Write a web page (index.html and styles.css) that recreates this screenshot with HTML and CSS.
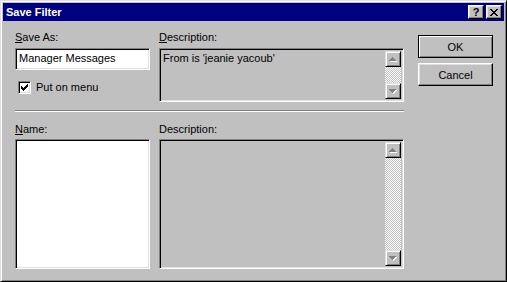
FILE: index.html
```
<!DOCTYPE html>
<html lang="en">
<head>
    <meta charset="UTF-8">
    <title>Save Filter</title>
    <link rel="stylesheet" href="styles.css">
</head>
<body>
    <div class="window">
        <div class="titlebar">
            <span class="title">Save Filter</span>
            <div class="caption-buttons">
                <div class="cap-btn help">?</div>
                <div class="cap-btn close">
                    <svg width="8" height="7" viewBox="0 0 8 7" shape-rendering="crispEdges"><path fill="#000" d="M0 0h2v1H0z M6 0h2v1H6z M1 1h2v1H1z M5 1h2v1H5z M2 2h4v1H2z M3 3h2v1H3z M2 4h4v1H2z M1 5h2v1H1z M5 5h2v1H5z M0 6h2v1H0z M6 6h2v1H6z"/></svg>
                </div>
            </div>
        </div>
        <div class="dialog">
            <div class="main">
                <div class="row top">
                    <div class="col name-col">
                        <div class="label"><u>S</u>ave As:</div>
                        <div class="edit">Manager Messages</div>
                        <div class="check-row">
                            <div class="checkbox">
                                <svg width="7" height="7" viewBox="0 0 7 7" shape-rendering="crispEdges"><path fill="#000" d="M0 2h1v3H0z M1 3h1v3H1z M2 4h1v3H2z M3 3h1v3H3z M4 2h1v3H4z M5 1h1v3H5z M6 0h1v3H6z"/></svg>
                            </div>
                            <span>Put on menu</span>
                        </div>
                    </div>
                    <div class="col desc-col">
                        <div class="label"><u>D</u>escription:</div>
                        <div class="memo small">
                            <div class="memo-text">From is 'jeanie yacoub'</div>
                            <div class="scrollbar">
                                <div class="sb-btn">
                                    <svg width="8" height="5" viewBox="0 0 8 5" shape-rendering="crispEdges"><path fill="#fff" d="M4 1h1v1H4z M3 2h3v1H3z M2 3h5v1H2z M1 4h7v1H1z"/><path fill="#808080" d="M3 0h1v1H3z M2 1h3v1H2z M1 2h5v1H1z M0 3h7v1H0z"/></svg>
                                </div>
                                <div class="sb-track"></div>
                                <div class="sb-btn">
                                    <svg width="8" height="5" viewBox="0 0 8 5" shape-rendering="crispEdges"><path fill="#fff" d="M1 1h7v1H1z M2 2h5v1H2z M3 3h3v1H3z M4 4h1v1H4z"/><path fill="#808080" d="M0 0h7v1H0z M1 1h5v1H1z M2 2h3v1H2z M3 3h1v1H3z"/></svg>
                                </div>
                            </div>
                        </div>
                    </div>
                </div>
                <div class="separator"></div>
                <div class="row bottom">
                    <div class="col name-col">
                        <div class="label"><u>N</u>ame:</div>
                        <div class="listbox"></div>
                    </div>
                    <div class="col desc-col">
                        <div class="label">Description:</div>
                        <div class="memo large">
                            <div class="memo-text"></div>
                            <div class="scrollbar">
                                <div class="sb-btn">
                                    <svg width="8" height="5" viewBox="0 0 8 5" shape-rendering="crispEdges"><path fill="#fff" d="M4 1h1v1H4z M3 2h3v1H3z M2 3h5v1H2z M1 4h7v1H1z"/><path fill="#808080" d="M3 0h1v1H3z M2 1h3v1H2z M1 2h5v1H1z M0 3h7v1H0z"/></svg>
                                </div>
                                <div class="sb-track"></div>
                                <div class="sb-btn">
                                    <svg width="8" height="5" viewBox="0 0 8 5" shape-rendering="crispEdges"><path fill="#fff" d="M1 1h7v1H1z M2 2h5v1H2z M3 3h3v1H3z M4 4h1v1H4z"/><path fill="#808080" d="M0 0h7v1H0z M1 1h5v1H1z M2 2h3v1H2z M3 3h1v1H3z"/></svg>
                                </div>
                            </div>
                        </div>
                    </div>
                </div>
            </div>
            <div class="buttons">
                <button class="btn default">OK</button>
                <button class="btn">Cancel</button>
            </div>
        </div>
    </div>
</body>
</html>
```

FILE: styles.css
```
body{
    margin: 0;
    background: #c0c0c0;
    font-family: "Liberation Sans", Arial, sans-serif;
    font-size: 11px;
    line-height: 13px;
    color: #000;
}
.window{
    box-sizing: border-box;
    width: 507px;
    height: 282px;
    padding: 2px;
    background: #c0c0c0;
    border: 1px solid;
    border-color: #dfdfdf #000 #000 #dfdfdf;
    box-shadow: inset 1px 1px #fff, inset -1px -1px #808080;
}
.titlebar{
    height: 18px;
    background: #000080;
    display: flex;
    align-items: center;
    justify-content: space-between;
    padding: 0 2px 0 3px;
}
.title{
    color: #fff;
    font-weight: bold;
}
.caption-buttons{
    display: flex;
    gap: 2px;
}
.cap-btn{
    box-sizing: border-box;
    width: 16px;
    height: 14px;
    background: #c0c0c0;
    border: 1px solid;
    border-color: #fff #000 #000 #fff;
    box-shadow: inset -1px -1px #808080, inset 1px 1px #dfdfdf;
    display: flex;
    align-items: center;
    justify-content: center;
}
.help{
    font-weight: bold;
    font-size: 11px;
    line-height: 11px;
    padding-top: 1px;
}
.close svg{
    margin-top: 1px;
}
.dialog{
    display: flex;
    padding: 10px 0 0 12px;
}
.main{
    width: 389px;
}
.row{
    display: flex;
    gap: 9px;
}
.col{
    display: flex;
    flex-direction: column;
}
.name-col{
    width: 135px;
}
.desc-col{
    width: 245px;
}
.label{
    margin-bottom: 4px;
}
.bottom .label{
    margin-bottom: 3px;
}
.edit, .listbox, .memo{
    box-sizing: border-box;
    border: 1px solid;
    border-color: #808080 #fff #fff #808080;
    box-shadow: inset 1px 1px #000, inset -1px -1px #dfdfdf;
}
.edit{
    height: 22px;
    background: #fff;
    padding: 3px 3px;
}
.check-row{
    display: flex;
    align-items: center;
    gap: 5px;
    margin: 11px 0 0 3px;
}
.checkbox{
    box-sizing: border-box;
    width: 13px;
    height: 13px;
    background: #fff;
    border: 1px solid;
    border-color: #808080 #fff #fff #808080;
    box-shadow: inset 1px 1px #000, inset -1px -1px #dfdfdf;
    display: flex;
    align-items: center;
    justify-content: center;
}
.memo{
    background: #c0c0c0;
    display: flex;
    padding: 2px;
}
.memo.small{
    height: 54px;
}
.memo.large{
    height: 130px;
}
.memo-text{
    flex: 1;
    padding: 1px 1px;
}
.scrollbar{
    width: 16px;
    display: flex;
    flex-direction: column;
}
.sb-btn{
    box-sizing: border-box;
    height: 16px;
    background: #c0c0c0;
    border: 1px solid;
    border-color: #dfdfdf #000 #000 #dfdfdf;
    box-shadow: inset 1px 1px #fff, inset -1px -1px #808080;
    display: flex;
    align-items: center;
    justify-content: center;
}
.sb-track{
    flex: 1;
    background: repeating-conic-gradient(#c0c0c0 0 25%, #fff 0 50%) 0 0 / 2px 2px;
}
.separator{
    height: 0;
    border-top: 1px solid #808080;
    border-bottom: 1px solid #fff;
    margin: 8px 0 11px;
}
.listbox{
    height: 130px;
    background: #fff;
}
.buttons{
    display: flex;
    flex-direction: column;
    gap: 5px;
    margin: 4px 0 0 14px;
}
.btn{
    box-sizing: border-box;
    width: 75px;
    height: 23px;
    padding: 0;
    font-family: inherit;
    font-size: 11px;
    background: #c0c0c0;
    color: #000;
    border: 1px solid;
    border-color: #fff #000 #000 #fff;
    box-shadow: inset -1px -1px #808080, inset 1px 1px #dfdfdf;
}
.btn.default{
    border-color: #000;
    box-shadow: inset 1px 1px #fff, inset -1px -1px #808080;
}
```
